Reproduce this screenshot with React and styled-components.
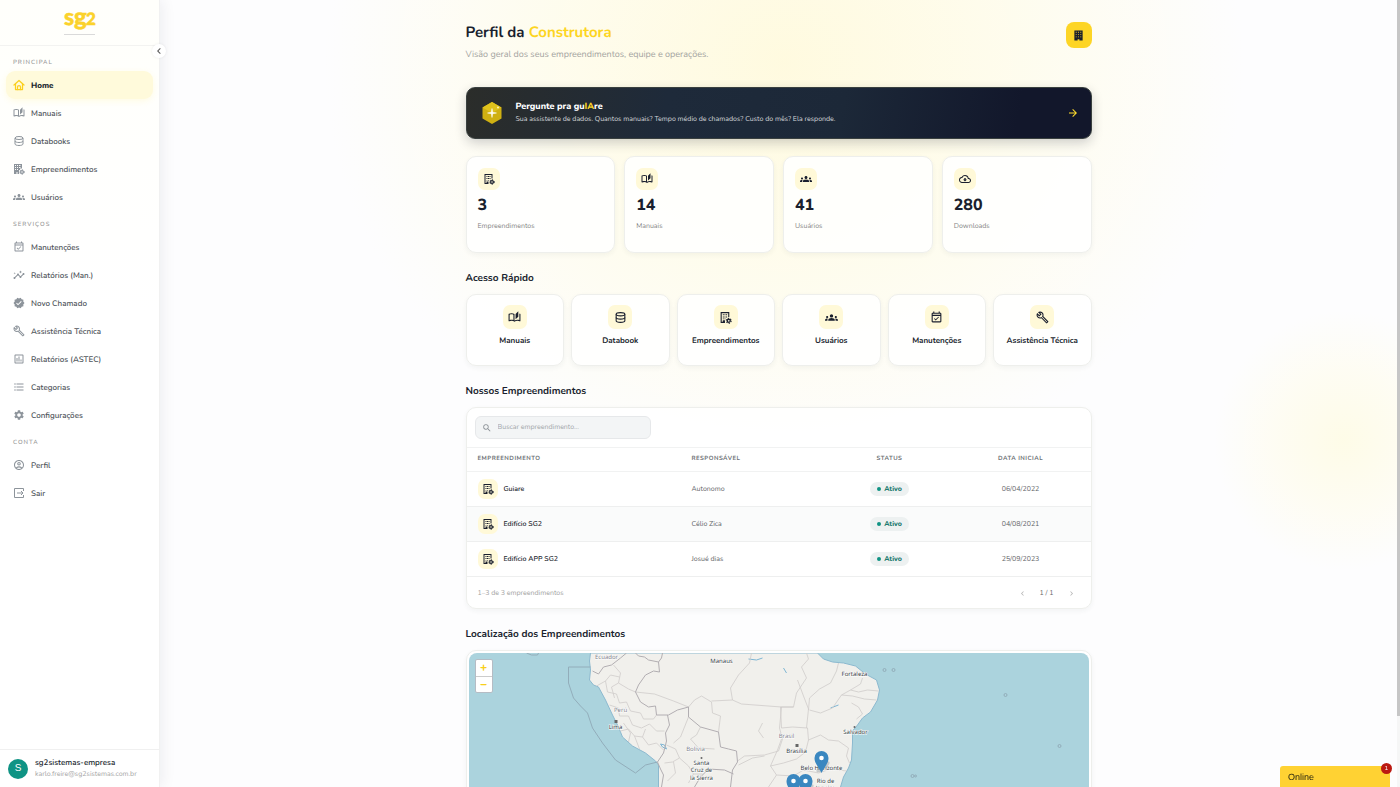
import React from "react";
import styled, { createGlobalStyle, css } from "styled-components";
import {
  MdOutlineAutoStories,
  MdGroups,
  MdOutlineEventAvailable,
  MdInsights,
  MdVerified,
  MdOutlineBuild,
  MdOutlineInsertChart,
  MdFormatListBulleted,
  MdSettings,
  MdOutlineAccountCircle,
  MdSearch,
  MdArrowForward,
  MdOutlineCloudDownload,
  MdChevronLeft,
  MdChevronRight,
} from "react-icons/md";

const GlobalStyle = createGlobalStyle`
  * { box-sizing: border-box; }
  body {
    margin: 0;
    font-family: "Nunito", "Lato", "Open Sans", sans-serif;
    text-rendering: geometricPrecision;
    color: #1a1f2e;
    background: #fdfdfd;
  }
  button, input { font-family: inherit; text-rendering: inherit; }
  a { color: inherit; text-decoration: none; }
  h1, h2, p, ul { margin: 0; padding: 0; }
  ul { list-style: none; }
`;

/* ---------- Icons ---------- */

const Svg = ({ children, ...rest }) => (
  <svg viewBox="0 0 24 24" width="1em" height="1em" fill="currentColor" aria-hidden="true" {...rest}>
    {children}
  </svg>
);

const HomeIcon = () => (
  <Svg fill="none" stroke="currentColor" strokeWidth="2.500" strokeLinejoin="round" strokeLinecap="round">
    <path d="M2 12 12 3l10 9" />
    <path d="M5 10v11h14V10" />
    <path d="M9 21v-5a3 3 0 0 1 6 0v5" />
  </Svg>
);

const DatabaseIcon = () => (
  <Svg fill="none" stroke="currentColor" strokeWidth="2">
    <ellipse cx="12" cy="6" rx="8" ry="3" />
    <path d="M4 6v12c0 1.700 3.600 3 8 3s8-1.300 8-3V6" />
    <path d="M4 12c0 1.700 3.600 3 8 3s8-1.300 8-3" />
  </Svg>
);

const Gear = ({ hole }) => (
  <>
    <circle cx="18" cy="18" r="4" />
    <circle cx="18" cy="18" r="4.500" fill="none" stroke="currentColor" strokeWidth="2" strokeDasharray="2.360 2.350" />
    <circle cx="18" cy="18" r="1.600" fill={hole} />
  </>
);

const BuildingCogIcon = () => (
  <Svg>
    <path d="M3 2h16v9h-2V4H5v16h2v-3h4v5H3z" />
    <path d="M7 6h2v2H7zm3 0h2v2h-2zm3 0h2v2h-2zM7 10h2v2H7zm3 0h2v2h-2zm3 0h2v2h-2zM7 14h2v1H7zm3 0h2v1h-2z" />
    <Gear hole="#fffbe0" />
  </Svg>
);

const BuildingGridIcon = () => (
  <Svg>
    <path
      fillRule="evenodd"
      d="M2 2h16v9h-4v3h-2v8H9v-4H7v4H2zm2 2v2h2V4zm4 0v2h2V4zm4 0v2h3V4zM4 8v2h2V8zm4 0v2h2V8zm4 0v2h3V8zM4 12v2h2v-2zm4 0v2h2v-2z"
    />
    <Gear hole="#ffffff" />
  </Svg>
);

const BuildingIcon = () => (
  <Svg>
    <path
      fillRule="evenodd"
      d="M3 1h18v22h-7v-3h-4v3H3zm3 3v2h2V4zm5 0v2h2V4zm5 0v2h2V4zM6 9v2h2V9zm5 0v2h2V9zm5 0v2h2V9zM6 14v2h2v-2zm5 0v2h2v-2zm5 0v2h2v-2z"
    />
  </Svg>
);

const ExitIcon = () => (
  <Svg fill="none" stroke="currentColor" strokeWidth="2">
    <path d="M21 8V3H3v18h18v-5" />
    <path d="M8 12h12M16 8l4 4-4 4" />
  </Svg>
);

const HexIcon = () => (
  <svg viewBox="0 0 24 26" width="24" height="26" aria-hidden="true">
    <path d="M12 2 21.500 7.500v11L12 24l-9.500-5.500v-11z" fill="#cfb012" />
    <path d="M12 2 21.500 7.500 12 13 2.500 7.500z" fill="#e0c21c" />
    <path d="M12 8.500 12.700 12.300 16.500 13l-3.800.700L12 17.500l-.700-3.800L7.500 13l3.800-.700z" fill="#fff" stroke="#fff" strokeWidth=".5" />
    <circle cx="18" cy="7.500" r="1" fill="#fff6b8" />
  </svg>
);

const Logo = () => (
  <svg viewBox="0 0 44 42" width="44" height="42" role="img" aria-label="sg2">
    <g fill="#fbd22b" stroke="#fbd22b" strokeWidth=".5" fontFamily="Lato, sans-serif" fontWeight="900">
      <text x="6" y="25" fontSize="23">s</text>
      <text x="16" y="25" fontSize="24">g</text>
      <text x="28" y="25" fontSize="17">2</text>
    </g>
    <path d="M6 34.500h31" stroke="#dadada" strokeWidth="1" />
  </svg>
);

/* ---------- Shell and sidebar ---------- */

const Shell = styled.div`
  display: flex;
  height: 100vh;
  overflow: hidden;
  background:
    radial-gradient(circle at 96% 56%, rgba(255, 251, 222, 0.7), rgba(255, 252, 232, 0.5) 70px, transparent 130px),
    radial-gradient(ellipse 460px 420px at 56% 8%, rgba(255, 250, 220, 0.9), rgba(255, 252, 232, 0.75) 50%, transparent),
    #fdfdfe;
`;

const Sidebar = styled.aside`
  position: relative;
  z-index: 1;
  flex: none;
  display: flex;
  flex-direction: column;
  width: 160px;
  background: linear-gradient(#fffffb, #ffffff 40%);
  border-right: 1px solid #f1f1f1;
  box-shadow: 2px 0 14px rgba(20, 30, 50, 0.07);
`;

const Brand = styled.div`
  display: flex;
  justify-content: center;
  height: 46px;
  border-bottom: 1px solid #f3f3f1;
`;

const CollapseButton = styled.button`
  position: absolute;
  top: 44px;
  right: -7px;
  display: grid;
  place-items: center;
  width: 14px;
  height: 14px;
  padding: 0;
  border: 0;
  border-radius: 50%;
  background: #fff;
  color: #555;
  font-size: 12px;
  box-shadow: 0 0 3px rgba(0, 0, 0, 0.08);
`;

const Nav = styled.nav`
  flex: 1;
  padding: 11px 6px;
`;

const NavLabel = styled.p`
  height: 14px;
  padding-left: 7px;
  color: #9a9a9a;
  font-size: 6px;
  line-height: 12px;
  font-weight: 600;
  letter-spacing: 1px;
  text-transform: uppercase;
`;

const NavList = styled.ul`
  margin-bottom: 8px;
`;

const NavLink = styled.a`
  display: flex;
  align-items: center;
  gap: 6px;
  height: 28px;
  padding: 0 7px;
  border-radius: 9px;
  color: #51565c;
  font-size: 8px;
  font-weight: 600;

  svg {
    flex: none;
    color: #8d949b;
    font-size: 12px;
  }

  ${({ $active }) =>
    $active &&
    css`
      background: #fffadb;
      color: #1a1f2e;
      font-weight: 800;
      box-shadow: 0 2px 6px rgba(255, 225, 80, 0.15);
      svg {
        color: #fbcf1d;
      }
    `}
`;

const Account = styled.div`
  display: flex;
  align-items: center;
  gap: 7px;
  height: 38px;
  padding: 0 8px;
  border-top: 1px solid #f0f0f0;
`;

const Avatar = styled.span`
  display: grid;
  place-items: center;
  flex: none;
  width: 20px;
  height: 20px;
  border-radius: 50%;
  background: #0f9384;
  color: #fff;
  font-family: "Liberation Sans", sans-serif;
  font-size: 10px;
`;

const AccountName = styled.p`
  font-size: 8px;
  line-height: 12px;
  font-weight: 600;
`;

const AccountMail = styled.p`
  color: #a5a5a5;
  font-size: 7px;
  line-height: 12px;
`;

/* ---------- Page ---------- */

const Main = styled.main`
  flex: 1;
  min-width: 0;
  overflow-y: auto;
  scrollbar-width: none;
`;

const ScrollRail = styled.div`
  flex: none;
  width: 3px;
  background: #f6f6f6;

  &::before {
    content: "";
    display: block;
    height: 91%;
    background: #c6c6c6;
  }
`;

const Content = styled.div`
  max-width: 626px;
  margin: 0 auto;
  padding: 22px 0 16px;
`;

const PageHeader = styled.header`
  display: flex;
  justify-content: space-between;
  align-items: flex-start;
  height: 65px;
`;

const Title = styled.h1`
  font-size: 15px;
  line-height: 22px;
  font-weight: 700;
  span { color: #fdd51f; }
`;

const Subtitle = styled.p`
  margin-top: 4px;
  color: #a3a3a0;
  font-size: 9px;
  line-height: 14px;
`;

const HeaderButton = styled.button`
  display: grid;
  place-items: center;
  width: 26px;
  height: 26px;
  padding: 0;
  border: 0;
  border-radius: 8px;
  background: #fdd526;
  color: #1a1f2e;
  font-size: 11px;
`;

const Banner = styled.a`
  display: flex;
  align-items: center;
  gap: 12px;
  height: 52px;
  padding: 0 12px 0 13px;
  border: 1px solid #39403f;
  border-radius: 9px;
  background: linear-gradient(100deg, #2b2d2a, #1e2a3a 32%, #1c2838 60%, #12172b 88%);
  color: #fff;
  box-shadow: 0 4px 12px rgba(20, 25, 45, 0.2);

  > svg:last-child {
    margin-left: auto;
    color: #fddc2c;
    font-size: 12px;
  }
`;

const BannerTitle = styled.p`
  font-size: 9px;
  line-height: 14px;
  font-weight: 800;
  span { color: #fdd526; }
`;

const BannerText = styled.p`
  color: #d5d8db;
  font-size: 7px;
  line-height: 12px;
`;

const cardStyle = css`
  border: 1px solid #eeefec;
  border-radius: 10px;
  background: rgba(255, 255, 255, 0.86);
  box-shadow: 0 2px 5px rgba(40, 50, 60, 0.05);
`;

const Stats = styled.section`
  display: grid;
  grid-template-columns: repeat(4, 1fr);
  gap: 9px;
  margin-top: 17px;
`;

const StatCard = styled.article`
  ${cardStyle}
  height: 97px;
  padding: 11px;
`;

const IconTile = styled.span`
  display: grid;
  place-items: center;
  flex: none;
  width: ${({ $size }) => $size}px;
  height: ${({ $size }) => $size}px;
  border-radius: 7px;
  background: #fff9d8;
  color: #1a1f2e;
  font-size: ${({ $icon }) => $icon}px;
`;

const StatValue = styled.p`
  margin-top: 3px;
  font-size: 16px;
  line-height: 24px;
  font-weight: 800;
`;

const StatLabel = styled.p`
  margin-top: 4px;
  color: #858585;
  font-size: 7px;
  line-height: 12px;
`;

const SectionTitle = styled.h2`
  margin: 18px 0 9px;
  font-size: 10px;
  line-height: 14px;
  font-weight: 700;
`;

const QuickGrid = styled.div`
  display: grid;
  grid-template-columns: repeat(6, 1fr);
  gap: 7px;
`;

const QuickCard = styled.button`
  ${cardStyle}
  display: flex;
  flex-direction: column;
  align-items: center;
  gap: 6px;
  height: 72px;
  padding: 10px 0 0;
  color: #1a1f2e;
  font-size: 8px;
  line-height: 12px;
  font-weight: 700;
`;

const TableCard = styled.section`
  ${cardStyle}
  overflow: hidden;
`;

const SearchBar = styled.div`
  padding: 8px;
`;

const SearchField = styled.label`
  display: flex;
  align-items: center;
  gap: 6px;
  width: 176px;
  height: 23px;
  padding: 0 6px;
  border: 1px solid #e6e8ea;
  border-radius: 6px;
  background: #f3f5f6;
  color: #8a9096;
  font-size: 10px;
`;

const SearchInput = styled.input`
  flex: 1;
  min-width: 0;
  padding: 0;
  border: 0;
  outline: 0;
  background: none;
  font-size: 7px;
  &::placeholder { color: #a2a6aa; }
`;

const Table = styled.table`
  width: 100%;
  table-layout: fixed;
  border-collapse: collapse;

  th, td {
    padding: 0 11px;
    text-align: left;
  }
  th:nth-child(n + 3), td:nth-child(n + 3) { text-align: center; }

  th {
    height: 24px;
    padding-bottom: 2px;
    border-top: 1px solid #f1f2f2;
    border-bottom: 1px solid #f1f2f2;
    color: #6e7276;
    font-size: 6px;
    font-weight: 700;
    letter-spacing: 0.08em;
    text-transform: uppercase;
  }
  th:nth-child(1) { width: 214px; }
  th:nth-child(3) { width: 122px; }
  th:nth-child(4) { width: 140px; }

  td {
    height: 35px;
    border-bottom: 1px solid #eeefef;
    color: #5f6367;
    font-size: 7px;
  }
  tbody tr:nth-child(even) { background: #fafbfb; }
`;

const NameCell = styled.div`
  display: flex;
  align-items: center;
  gap: 6px;
  color: #23272f;
  font-weight: 600;
`;

const Status = styled.span`
  display: inline-flex;
  align-items: center;
  gap: 3px;
  height: 14px;
  padding: 0 7px;
  border-radius: 7px;
  background: #edf1f1;
  color: #1c7a70;
  font-size: 7px;
  font-weight: 800;

  &::before {
    content: "";
    width: 4px;
    height: 4px;
    border-radius: 50%;
    background: #0f9384;
  }
`;

const TableFooter = styled.footer`
  display: flex;
  align-items: center;
  justify-content: space-between;
  height: 31px;
  padding: 2px 11px 0;
  color: #a2a2a2;
  font-size: 7px;
`;

const Pager = styled.div`
  display: flex;
  align-items: center;
  gap: 9px;
  color: #666;
  button {
    display: grid;
    place-items: center;
    width: 17px;
    height: 17px;
    padding: 0;
    border: 0;
    background: none;
    color: #b5b5b5;
    font-size: 9px;
  }
`;

const MapCard = styled.section`
  ${cardStyle}
  position: relative;
  padding: 2px;
  > svg {
    display: block;
    width: 100%;
    height: 196px;
    border-radius: 8px;
  }
`;

const ZoomControl = styled.div`
  position: absolute;
  top: 8px;
  left: 8px;
  width: 18px;
  border: 1px solid #b5bcc4;
  border-radius: 2px;
  background: #fff;
  button {
    display: block;
    width: 100%;
    height: 16px;
    padding: 0;
    border: 0;
    background: none;
    color: #f8cf1c;
    font-size: 12px;
    line-height: 16px;
    font-weight: 800;
  }
  button + button { border-top: 1px solid #ccc; }
`;

const Chat = styled.button`
  position: fixed;
  z-index: 2;
  right: 10px;
  bottom: 0;
  width: 110px;
  height: 21px;
  padding: 0 8px;
  border: 0;
  border-radius: 3px 3px 0 0;
  background: #ffd233;
  color: #2b2710;
  font-family: "Liberation Sans", sans-serif;
  font-size: 9px;
  text-align: left;
`;

const ChatBadge = styled.span`
  position: absolute;
  top: -3px;
  right: -2px;
  display: grid;
  place-items: center;
  width: 11px;
  height: 11px;
  border-radius: 50%;
  background: #bb1a12;
  color: #fff;
  font-size: 6px;
`;

/* ---------- Map drawing ---------- */

const LAND =
  "M122 0 121 8 122 17 121 27 125 32 130 34 137 47 144 62 150 74 154 84 164 93 177 100 187 108 190 112 190 134 188 200 300 200 320 165 352 150 366 142 372 134 375 124 380 115 383 107 384 90 384 78 389 72 394 65 402 59 409 47 411 37 408 27 397 21 387 13 375 10 364 9 355 6 349 0z";

const COUNTRY_BORDERS = [
  "M167 0 170 3 176 4 180 7 190 9 193 5 194 0M190 9 191 19 185 18 177 22 170 32 167 39 172 49 180 54 187 53 188 62 200 62 209 57 220 54 220 64 232 74 250 79 252 94 260 96 268 98 269 109 264 117 262 134 268 146",
  "M199 62 201 72 197 80 198 88 195 100 189 109 192 116 195 122 193 134 199 150",
  "M124 18 130 21 135 14 143 12 152 5 158 0M232 124 240 116 256 117 265 121M232 124 226 134 230 150",
];

const STATE_BORDERS = [
  "M167 39 186 41 205 48 220 54 226 47 233 43 243 49 244 60 252 63 250 79M243 48 264 47 262 35 270 22 281 10 283 0M264 47 273 51 313 54M313 54 311 75 314 86 310 98 296 102 276 103 269 108",
  "M313 54 325 54 328 40 338 25 333 14 340 6 338 0M325 54 312 54 313 75 324 74 339 75 340 87M329 27 335 43 340 56 338 75M340 57 341 45 351 36 362 30 368 18 370 10M341 57 352 60 364 55 373 42 382 37 392 31 394 25M373 42 384 43 396 46 408 47M382 37 390 39 399 37 410 38M383 50 390 54 394 61 388 66",
  "M340 87 352 82 360 87 370 88 380 95 378 103 381 110M302 113 315 110 328 106 337 99 340 87M302 113 308 122 325 123 335 117 350 120 362 116 378 118M308 122 300 134 292 145M313 86 309 97 302 113M232 74 228 82 222 86 230 95 246 96",
  "M128 33 137 28 142 22 151 24M137 28 139 39 148 41 151 50 158 49 162 58 172 60 175 66 185 66 188 62M145 12 152 20 150 30 160 36 167 39M141 52 150 55 151 63 160 63 164 72 173 75 181 71 188 78 196 78M152 78 160 76 166 83 174 84 180 92 188 90 195 97M155 70 162 80 160 89M166 83 171 96M174 84 177 76M150 30 143 34 146 45",
  "M196 110 204 109 211 105 220 113 225 121 234 121M205 90 212 84 220 64M211 105 207 96 198 92M205 109 207 120 199 128M225 121 220 130M270 112 284 105 296 103M295 85 290 78 294 70",
];

const Marker = ({ x, y }) => (
  <g transform={`translate(${x} ${y})`}>
    <ellipse cx="5" cy="-4" rx="8" ry="3" fill="#64707a" opacity=".3" transform="rotate(-38)" />
    <path d="M0 0C-2-5-7-9-7-15a7 7 0 0 1 14 0C7-9 2-5 0 0z" fill="#3a87c0" />
    <circle cy="-15" r="2.300" fill="#fff" />
  </g>
);

const PLACES = [
  ["Ecuador", 138, 6, 1], ["Perú", 152, 59, 1], ["Lima", 147, 76, 0], ["Manaus", 253, 10, 0],
  ["Fortaleza", 386, 23, 0], ["Salvador", 387, 81, 0], ["Brasil", 318, 85, 1], ["Brasília", 328, 100, 0],
  ["Belo Horizonte", 353, 117, 0], ["Rio de", 357, 130, 0], ["Janeiro", 357, 137, 0], ["Bolivia", 227, 98, 1],
  ["Santa", 233, 112, 0], ["Cruz de", 233, 119, 0], ["la Sierra", 233, 127, 0],
];

const MapDrawing = () => (
  <svg viewBox="0 0 621 196" preserveAspectRatio="xMidYMin slice" role="img" aria-label="Mapa dos empreendimentos">
    <rect width="621" height="196" fill="#abd3dd" />
    <path d={LAND} fill="#f1f0ec" stroke="#8cb9cf" strokeWidth="1" />
    <g fill="none" stroke="#92adba" strokeWidth="1">
      <path d="M58 0 63 2 69 2 70 0M122 14H100V30L105 45 112 53 119 60 124 75 134 90 147 107 167 120 177 112 189 109" />
      <circle cx="416" cy="17" r="1.500" /><circle cx="425" cy="17" r="1.500" />
      <circle cx="537" cy="42" r="1.500" /><circle cx="591" cy="93" r="1.500" />
      <circle cx="444" cy="123" r="1.500" /><circle cx="447" cy="123" r="1" />
    </g>
    <path d="M192 91 196 92 198 96 194 94zM315 15 318 20M362 55 370 52M280 6 288 7 294 5" fill="none" stroke="#7eb5d3" />
    <g fill="none" stroke="#cfccca" strokeWidth=".8">
      {STATE_BORDERS.map((d) => <path key={d} d={d} />)}
    </g>
    <g fill="none" stroke="#b2aeb2" strokeWidth="1">
      {COUNTRY_BORDERS.map((d) => <path key={d} d={d} />)}
    </g>
    <g fill="#666"><rect x="146" y="67" width="3" height="3" /><rect x="327" y="91" width="3" height="3" /><circle cx="233" cy="105" r="1" /><circle cx="386" cy="74" r="1" /></g>
    <g fontFamily="Noto Sans, sans-serif" fontSize="6" textAnchor="middle" stroke="#fff" strokeWidth="1" paintOrder="stroke">
      {PLACES.map(([name, x, y, country]) => (
        <text key={name} x={x} y={y} fill={country ? "#80808a" : "#333a40"}>{name}</text>
      ))}
    </g>
    <Marker x="353" y="120" />
    <Marker x="325" y="143" />
    <Marker x="337" y="143" />
  </svg>
);

/* ---------- Data ---------- */

const NAV = [
  {
    label: "Principal",
    items: [
      ["Home", HomeIcon, true],
      ["Manuais", MdOutlineAutoStories],
      ["Databooks", DatabaseIcon],
      ["Empreendimentos", BuildingGridIcon],
      ["Usuários", MdGroups],
    ],
  },
  {
    label: "Serviços",
    items: [
      ["Manutenções", MdOutlineEventAvailable],
      ["Relatórios (Man.)", MdInsights],
      ["Novo Chamado", MdVerified],
      ["Assistência Técnica", MdOutlineBuild],
      ["Relatórios (ASTEC)", MdOutlineInsertChart],
      ["Categorias", MdFormatListBulleted],
      ["Configurações", MdSettings],
    ],
  },
  {
    label: "Conta",
    items: [
      ["Perfil", MdOutlineAccountCircle],
      ["Sair", ExitIcon],
    ],
  },
];

const STATS = [
  ["3", "Empreendimentos", BuildingCogIcon],
  ["14", "Manuais", MdOutlineAutoStories],
  ["41", "Usuários", MdGroups],
  ["280", "Downloads", MdOutlineCloudDownload],
];

const QUICK = [
  ["Manuais", MdOutlineAutoStories],
  ["Databook", DatabaseIcon],
  ["Empreendimentos", BuildingCogIcon],
  ["Usuários", MdGroups],
  ["Manutenções", MdOutlineEventAvailable],
  ["Assistência Técnica", MdOutlineBuild],
];

const PROJECTS = [
  ["Guiare", "Autonomo", "06/04/2022"],
  ["Edifício SG2", "Célio Zica", "04/08/2021"],
  ["Edifício APP SG2", "Josué dias", "25/09/2023"],
];

export default function App() {
  return (
    <Shell>
      <GlobalStyle />
      <Sidebar>
        <Brand><Logo /></Brand>
        <CollapseButton type="button" aria-label="Recolher menu"><MdChevronLeft /></CollapseButton>
        <Nav>
          {NAV.map(({ label, items }) => (
            <React.Fragment key={label}>
              <NavLabel>{label}</NavLabel>
              <NavList>
                {items.map(([text, Icon, active]) => (
                  <li key={text}>
                    <NavLink href="#" $active={active}><Icon />{text}</NavLink>
                  </li>
                ))}
              </NavList>
            </React.Fragment>
          ))}
        </Nav>
        <Account>
          <Avatar>S</Avatar>
          <div>
            <AccountName>sg2sistemas-empresa</AccountName>
            <AccountMail>karlo.freire@sg2sistemas.com.br</AccountMail>
          </div>
        </Account>
      </Sidebar>

      <Main>
        <Content>
          <PageHeader>
            <div>
              <Title>Perfil da <span>Construtora</span></Title>
              <Subtitle>Visão geral dos seus empreendimentos, equipe e operações.</Subtitle>
            </div>
            <HeaderButton type="button" aria-label="Construtora"><BuildingIcon /></HeaderButton>
          </PageHeader>

          <Banner href="#">
            <HexIcon />
            <div>
              <BannerTitle>Pergunte pra gu<span>IA</span>re</BannerTitle>
              <BannerText>Sua assistente de dados. Quantos manuais? Tempo médio de chamados? Custo do mês? Ela responde.</BannerText>
            </div>
            <MdArrowForward />
          </Banner>

          <Stats>
            {STATS.map(([value, label, Icon]) => (
              <StatCard key={label}>
                <IconTile $size={22} $icon={12}><Icon /></IconTile>
                <StatValue>{value}</StatValue>
                <StatLabel>{label}</StatLabel>
              </StatCard>
            ))}
          </Stats>

          <SectionTitle>Acesso Rápido</SectionTitle>
          <QuickGrid>
            {QUICK.map(([label, Icon]) => (
              <QuickCard key={label} type="button">
                <IconTile $size={24} $icon={13}><Icon /></IconTile>
                {label}
              </QuickCard>
            ))}
          </QuickGrid>

          <SectionTitle>Nossos Empreendimentos</SectionTitle>
          <TableCard>
            <SearchBar>
              <SearchField>
                <MdSearch aria-hidden="true" />
                <SearchInput type="search" aria-label="Buscar empreendimento" placeholder="Buscar empreendimento..." />
              </SearchField>
            </SearchBar>
            <Table>
              <thead>
                <tr>
                  <th>Empreendimento</th>
                  <th>Responsável</th>
                  <th>Status</th>
                  <th>Data inicial</th>
                </tr>
              </thead>
              <tbody>
                {PROJECTS.map(([name, owner, date]) => (
                  <tr key={name}>
                    <td>
                      <NameCell>
                        <IconTile $size={20} $icon={12}><BuildingCogIcon /></IconTile>
                        {name}
                      </NameCell>
                    </td>
                    <td>{owner}</td>
                    <td><Status>Ativo</Status></td>
                    <td>{date}</td>
                  </tr>
                ))}
              </tbody>
            </Table>
            <TableFooter>
              <span>1–3 de 3 empreendimentos</span>
              <Pager>
                <button type="button" aria-label="Página anterior"><MdChevronLeft /></button>
                <span>1 / 1</span>
                <button type="button" aria-label="Próxima página"><MdChevronRight /></button>
              </Pager>
            </TableFooter>
          </TableCard>

          <SectionTitle>Localização dos Empreendimentos</SectionTitle>
          <MapCard>
            <MapDrawing />
            <ZoomControl>
              <button type="button" aria-label="Aproximar">+</button>
              <button type="button" aria-label="Afastar">−</button>
            </ZoomControl>
          </MapCard>
        </Content>
      </Main>
      <ScrollRail aria-hidden="true" />

      <Chat type="button">
        Online
        <ChatBadge>1</ChatBadge>
      </Chat>
    </Shell>
  );
}
